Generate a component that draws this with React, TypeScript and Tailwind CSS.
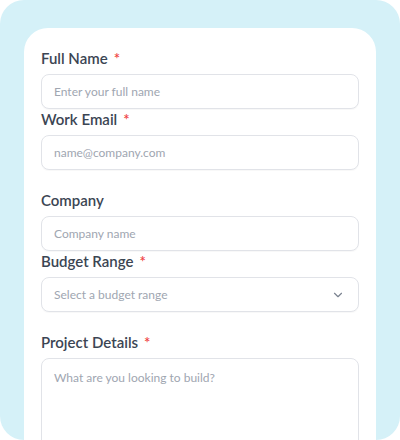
import { ChevronDown } from "lucide-react";

type FieldProps = {
  label: string;
  required?: boolean;
  children: React.ReactNode;
};

function Field({ label, required, children }: FieldProps) {
  return (
    <div>
      <label className="mb-1.5 block text-[15px] font-semibold leading-5 text-[#3b4553]">
        {label}
        {required && <span className="ml-1.5 text-[#ef4444]">*</span>}
      </label>
      {children}
    </div>
  );
}

const inputCls =
  "block h-[35px] w-full rounded-lg border border-[#e1e3e8] bg-white px-3 text-[12px] text-[#374151] shadow-[0_1px_1px_rgba(0,0,0,0.03)] outline-none placeholder:text-[#a0a6b1]";

export default function App() {
  return (
    <div
      className="h-[440px] w-[400px] overflow-hidden bg-white"
      style={{ fontFamily: "Lato, 'Open Sans', sans-serif" }}
    >
      <div className="h-full overflow-hidden rounded-3xl bg-[#d5f1f8] px-6 pt-7">
        <div className="h-[460px] rounded-t-3xl bg-white px-[17px] pt-5">
          <div className="flex flex-col gap-5">
            <div>
              <Field label="Full Name" required>
                <input className={inputCls} placeholder="Enter your full name" />
              </Field>
              <Field label="Work Email" required>
                <input className={inputCls} placeholder="name@company.com" />
              </Field>
            </div>
            <div>
              <Field label="Company">
                <input className={inputCls} placeholder="Company name" />
              </Field>
              <Field label="Budget Range" required>
                <div className="relative">
                  <div className={inputCls + " flex items-center text-[#a0a6b1]"}>
                    Select a budget range
                  </div>
                  <ChevronDown
                    className="absolute right-3.5 top-1/2 -translate-y-1/2 text-[#7b8390]"
                    size={14}
                    strokeWidth={2}
                  />
                </div>
              </Field>
            </div>
            <Field label="Project Details" required>
              <textarea
                className="block h-[120px] w-full resize-none rounded-lg border border-[#e1e3e8] bg-white px-3 py-2.5 text-[12px] text-[#374151] outline-none placeholder:text-[#a0a6b1]"
                placeholder="What are you looking to build?"
              />
            </Field>
          </div>
        </div>
      </div>
    </div>
  );
}
